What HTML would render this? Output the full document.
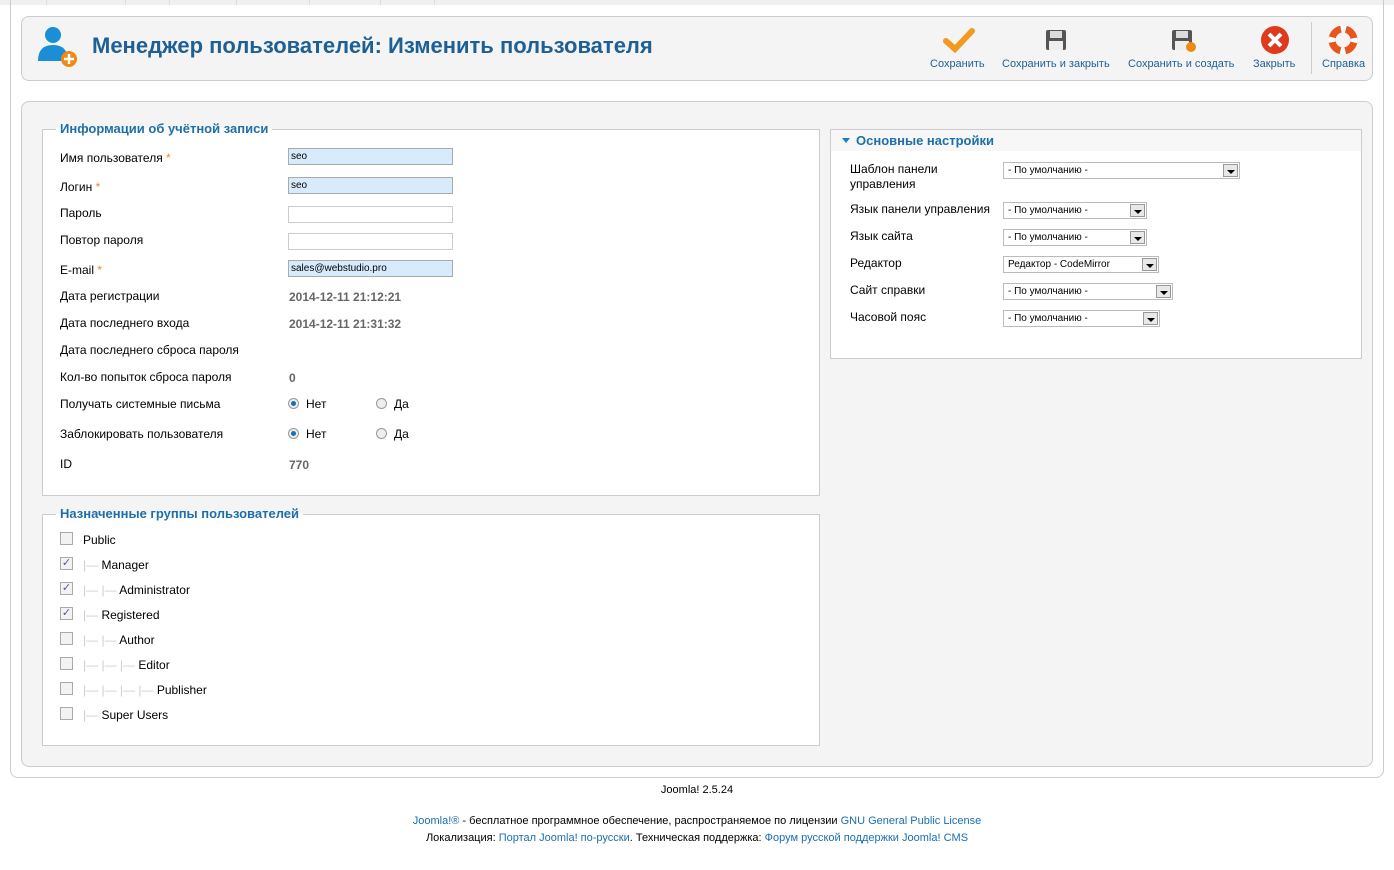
<!DOCTYPE html>
<html><head><meta charset="utf-8"><style>
*{box-sizing:border-box;margin:0;padding:0}
body{width:1394px;height:870px;background:#fff;font-family:"Liberation Sans",Arial,sans-serif;font-size:12px;color:#000;position:relative;overflow:hidden}
.a{position:absolute;white-space:nowrap}
.lbl{position:absolute;left:60px;font-size:12px}
.val{position:absolute;left:289px;color:#666;font-weight:bold;font-size:12px}
.inp{position:absolute;left:288px;width:165px;height:17px;border:1px solid #ccc;background:#fff;font-size:10px;padding:1px 2px;line-height:13px}
.inp.f{background:#d8ebfc;border-color:#aaa}
.sel{position:absolute;left:1003px;height:17px;border:1px solid #bbb;background:#fff;font-size:10px;padding:1px 4px;line-height:13px}
.sel i{position:absolute;right:1px;top:1px;width:15px;height:13px;background:#e8e8e8;border:1px solid #999}
.sel i:after{content:"";position:absolute;left:3px;top:5px;border:4px solid transparent;border-top:4px solid #000;border-bottom:0}
.rad{position:absolute;width:11px;height:11px;border-radius:50%;border:1px solid #999;background:#eee}
.rad.on:after{content:"";position:absolute;left:2px;top:2px;width:5px;height:5px;border-radius:50%;background:#1a6fb0}
.cb{position:absolute;left:60px;width:13px;height:13px;border:1px solid #aaa;background:#f2f2f2;font-size:11px;line-height:11px;color:#4a5a9a;text-align:center}
.tr{color:#ccc}
.tb{position:absolute;top:58px;color:#1e5f95;font-size:11px}
a{color:#1a6fb0;text-decoration:none}
.sp{position:absolute;top:0;width:1px;height:5px;background:#ddd}
</style></head><body>
<div class="a" style="left:0;top:0;width:1394px;height:5px;background:#f0f0f0"></div>
<div class="sp" style="left:46px"></div><div class="sp" style="left:125px"></div><div class="sp" style="left:169px"></div><div class="sp" style="left:236px"></div><div class="sp" style="left:309px"></div><div class="sp" style="left:380px"></div><div class="sp" style="left:434px"></div>
<div class="a" style="left:10px;top:0;width:1374px;height:778px;border:1px solid #ccc;border-top:0;border-radius:0 0 8px 8px"></div>
<div class="a" style="left:21px;top:16px;width:1352px;height:65px;background:#f4f4f4;border:1px solid #ccc;border-radius:8px"></div>
<svg class="a" style="left:33px;top:23px" width="46" height="46" viewBox="0 0 46 46"><circle cx="20" cy="12" r="8" fill="#1a8fd8"/><path d="M5 38 Q5 22 20 22 Q35 22 35 38 Z" fill="#1a8fd8"/><circle cx="36" cy="36" r="8" fill="#f08a12"/><path d="M36 31v10M31 36h10" stroke="#fff" stroke-width="2.5"/></svg>
<div class="a" style="left:92px;top:33px;font-size:22px;font-weight:bold;color:#1e5f95">Менеджер пользователей: Изменить пользователя</div>
<svg class="a" style="left:943px;top:27px" width="32" height="26"><path d="M3 14 L12 22 L29 4" stroke="#f09a20" stroke-width="6" fill="none" stroke-linecap="round"/></svg>
<svg class="a" style="left:1045px;top:29px" width="22" height="22"><rect x="1" y="1" width="20" height="20" rx="2" fill="#555"/><rect x="5" y="2" width="12" height="7" fill="#ddd"/><rect x="4" y="12" width="14" height="9" fill="#eee"/></svg>
<svg class="a" style="left:1171px;top:29px" width="26" height="24"><rect x="1" y="1" width="20" height="20" rx="2" fill="#555"/><rect x="5" y="2" width="12" height="7" fill="#ddd"/><rect x="4" y="12" width="14" height="9" fill="#eee"/><circle cx="20" cy="18" r="5" fill="#f08a12"/></svg>
<svg class="a" style="left:1260px;top:26px" width="30" height="30"><circle cx="15" cy="14" r="14" fill="#e03a1e"/><path d="M9 8l12 12M21 8L9 20" stroke="#fff" stroke-width="4"/></svg>
<svg class="a" style="left:1328px;top:26px" width="30" height="28"><circle cx="15" cy="14" r="11" fill="none" stroke="#e8561e" stroke-width="7"/><circle cx="15" cy="14" r="11" fill="none" stroke="#fff" stroke-width="7" stroke-dasharray="5 12.3" stroke-dashoffset="2.5"/></svg>
<div class="a" style="left:1311px;top:22px;width:1px;height:52px;background:#ccc"></div>
<div class="tb" style="left:930px">Сохранить</div>
<div class="tb" style="left:1002px">Сохранить и закрыть</div>
<div class="tb" style="left:1128px">Сохранить и создать</div>
<div class="tb" style="left:1253px">Закрыть</div>
<div class="tb" style="left:1322px">Справка</div>
<div class="a" style="left:21px;top:101px;width:1352px;height:666px;background:#f4f4f4;border:1px solid #ccc;border-radius:8px"></div>
<div class="a" style="left:42px;top:129px;width:778px;height:367px;background:#fff;border:1px solid #ccc"></div>
<div class="a" style="left:56px;top:121px;padding:0 4px;font-size:13px;font-weight:bold;color:#1e6fa8;background:linear-gradient(#f4f4f4 50%,#fff 50%)">Информации об учётной записи</div>
<div class="lbl" style="top:151px">Имя пользователя <span style="color:#f08a12">*</span></div>
<div class="inp f" style="top:148px">seo</div>
<div class="lbl" style="top:180px">Логин <span style="color:#f08a12">*</span></div>
<div class="inp f" style="top:177px">seo</div>
<div class="lbl" style="top:206px">Пароль</div><div class="inp" style="top:206px"></div>
<div class="lbl" style="top:233px">Повтор пароля</div><div class="inp" style="top:233px"></div>
<div class="lbl" style="top:263px">E-mail <span style="color:#f08a12">*</span></div>
<div class="inp f" style="top:260px">sales@webstudio.pro</div>
<div class="lbl" style="top:289px">Дата регистрации</div><div class="val" style="top:290px">2014-12-11 21:12:21</div>
<div class="lbl" style="top:316px">Дата последнего входа</div><div class="val" style="top:317px">2014-12-11 21:31:32</div>
<div class="lbl" style="top:343px">Дата последнего сброса пароля</div>
<div class="lbl" style="top:370px">Кол-во попыток сброса пароля</div><div class="val" style="top:371px">0</div>
<div class="lbl" style="top:397px">Получать системные письма</div>
<div class="rad on" style="left:288px;top:398px"></div><div class="a" style="left:306px;top:397px">Нет</div>
<div class="rad" style="left:376px;top:398px"></div><div class="a" style="left:394px;top:397px">Да</div>
<div class="lbl" style="top:427px">Заблокировать пользователя</div>
<div class="rad on" style="left:288px;top:428px"></div><div class="a" style="left:306px;top:427px">Нет</div>
<div class="rad" style="left:376px;top:428px"></div><div class="a" style="left:394px;top:427px">Да</div>
<div class="lbl" style="top:457px">ID</div><div class="val" style="top:458px">770</div>
<div class="a" style="left:42px;top:514px;width:778px;height:232px;background:#fff;border:1px solid #ccc"></div>
<div class="a" style="left:56px;top:506px;padding:0 4px;font-size:13px;font-weight:bold;color:#1e6fa8;background:linear-gradient(#f4f4f4 50%,#fff 50%)">Назначенные группы пользователей</div>
<div class="cb" style="top:532px"></div><div class="a" style="left:83px;top:533px">Public</div>
<div class="cb" style="top:557px">✓</div><div class="a" style="left:83px;top:558px"><span class="tr">|—</span> Manager</div>
<div class="cb" style="top:582px">✓</div><div class="a" style="left:83px;top:583px"><span class="tr">|— |—</span> Administrator</div>
<div class="cb" style="top:607px">✓</div><div class="a" style="left:83px;top:608px"><span class="tr">|—</span> Registered</div>
<div class="cb" style="top:632px"></div><div class="a" style="left:83px;top:633px"><span class="tr">|— |—</span> Author</div>
<div class="cb" style="top:657px"></div><div class="a" style="left:83px;top:658px"><span class="tr">|— |— |—</span> Editor</div>
<div class="cb" style="top:682px"></div><div class="a" style="left:83px;top:683px"><span class="tr">|— |— |— |—</span> Publisher</div>
<div class="cb" style="top:707px"></div><div class="a" style="left:83px;top:708px"><span class="tr">|—</span> Super Users</div>
<div class="a" style="left:830px;top:129px;width:532px;height:230px;background:#fff;border:1px solid #ccc"></div>
<div class="a" style="left:831px;top:130px;width:530px;height:21px;background:#f7f7f7"></div>
<div class="a" style="left:842px;top:138px;border:4px solid transparent;border-top:5px solid #1a7fc0;border-bottom:0"></div>
<div class="a" style="left:856px;top:133px;font-size:13px;font-weight:bold;color:#1e6fa8">Основные настройки</div>
<div class="a" style="left:850px;top:162px;line-height:15px">Шаблон панели<br>управления</div>
<div class="sel" style="top:162px;width:237px">- По умолчанию -<i></i></div>
<div class="a" style="left:850px;top:202px">Язык панели управления</div>
<div class="sel" style="top:202px;width:144px">- По умолчанию -<i></i></div>
<div class="a" style="left:850px;top:229px">Язык сайта</div>
<div class="sel" style="top:229px;width:144px">- По умолчанию -<i></i></div>
<div class="a" style="left:850px;top:256px">Редактор</div>
<div class="sel" style="top:256px;width:156px">Редактор - CodeMirror<i></i></div>
<div class="a" style="left:850px;top:283px">Сайт справки</div>
<div class="sel" style="top:283px;width:170px">- По умолчанию -<i></i></div>
<div class="a" style="left:850px;top:310px">Часовой пояс</div>
<div class="sel" style="top:310px;width:157px">- По умолчанию -<i></i></div>
<div class="a" style="left:0;width:1394px;top:784px;text-align:center;font-size:11px">Joomla! 2.5.24</div>
<div class="a" style="left:0;width:1394px;top:815px;text-align:center;font-size:11px"><a>Joomla!®</a> - бесплатное программное обеспечение, распространяемое по лицензии <a>GNU General Public License</a></div>
<div class="a" style="left:0;width:1394px;top:832px;text-align:center;font-size:11px">Локализация: <a>Портал Joomla! по-русски</a>. Техническая поддержка: <a>Форум русской поддержки Joomla! CMS</a></div>
</body></html>
